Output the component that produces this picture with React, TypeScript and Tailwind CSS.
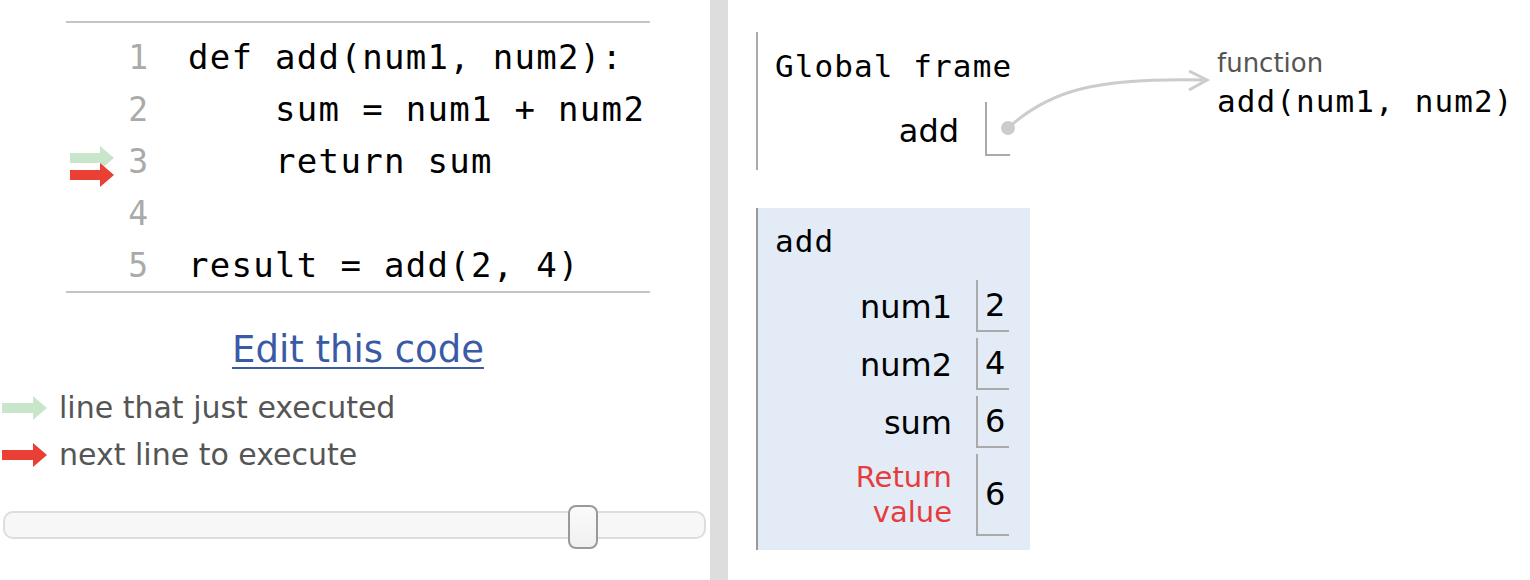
import React from "react";

const mono = "font-['DejaVu_Sans_Mono',monospace]";
const sans = "font-['DejaVu_Sans',sans-serif]";

function Arrow({ color, w = 44 }: { color: string; w?: number }) {
  const s = w - 14;
  return (
    <svg width={w} height={24} viewBox={`0 0 ${w} 24`}>
      <rect x={0} y={7} width={s} height={10} fill={color} />
      <polygon points={`${s},0 ${w},12 ${s},24`} fill={color} />
    </svg>
  );
}

const lines = [
  "def add(num1, num2):",
  "    sum = num1 + num2",
  "    return sum",
  "",
  "result = add(2, 4)",
];

function CodeRow({ n, code }: { n: number; code: string }) {
  return (
    <div className="flex h-[52px] items-center">
      <div className="flex h-full w-[54px] items-center justify-end pr-[6px]">
        {n === 3 && (
          <svg width={44} height={54} viewBox="0 0 44 54" className="shrink-0">
            <rect x={0} y={19} width={30} height={10} fill="#c9e6ca" />
            <polygon points="30,12 44,24 30,36" fill="#c9e6ca" />
            <rect x={0} y={36} width={30} height={10} fill="#e93f34" />
            <polygon points="30,29 44,41 30,53" fill="#e93f34" />
          </svg>
        )}
      </div>
      <div className={`w-[28px] text-right text-[33px] leading-none text-[#aaaaaa] ${mono}`}>{n}</div>
      <div className={`ml-[40px] whitespace-pre text-[34px] leading-none tracking-[1.3px] text-black ${mono}`}>
        {code}
      </div>
    </div>
  );
}

function VarRow({
  label,
  value,
  h,
  red,
  labelW,
  boxW,
  labelPt = "",
  gap = "ml-[26px]",
}: {
  label: React.ReactNode;
  value: string;
  h: number;
  red?: boolean;
  labelW: string;
  boxW: string;
  labelPt?: string;
  gap?: string;
}) {
  return (
    <div className="flex items-center" style={{ height: h }}>
      <div
        className={`${labelW} ${labelPt} text-right ${sans} ${
          red ? "text-[29px] leading-[35px] text-[#e63c3c]" : "text-[32px] leading-none text-black"
        }`}
      >
        {label}
      </div>
      <div
        className={`${gap} flex h-full ${boxW} items-center border-b-2 border-l-2 border-[#aaaaaa] pl-[7px] text-[32px] leading-none text-black ${sans}`}
      >
        {value}
      </div>
    </div>
  );
}

export default function App() {
  return (
    <div className="relative flex h-[580px] w-[1530px] overflow-hidden bg-white">
      {/* Left panel */}
      <div className="flex w-[710px] shrink-0 flex-col">
        <div className="ml-[66px] mt-[21px] w-[584px] border-y-2 border-[#c4c4c4] pt-[8px]">
          {lines.map((c, i) => (
            <CodeRow key={i} n={i + 1} code={c} />
          ))}
        </div>
        <div className="mt-[34px] flex h-[44px] items-center justify-center">
          <span className={`ml-[6px] text-[37px] leading-none text-[#3a5aa6] underline decoration-2 underline-offset-[5px] ${sans}`}>
            Edit this code
          </span>
        </div>
        <div className="mt-[17px] flex h-[40px] items-center pl-[2px]">
          <Arrow color="#c9e6ca" w={45} />
          <span className={`ml-[12px] text-[30px] leading-none text-[#555555] ${sans}`}>line that just executed</span>
        </div>
        <div className="mt-[7px] flex h-[40px] items-center pl-[2px]">
          <Arrow color="#e93f34" w={45} />
          <span className={`ml-[12px] text-[30px] leading-none text-[#555555] ${sans}`}>next line to execute</span>
        </div>
        <div className="relative ml-[3px] mt-[36px] h-[28px] w-[703px] rounded-[10px] border-2 border-[#dddddd] bg-[#f7f7f7]">
          <div className="absolute left-[563px] top-[-8px] h-[44px] w-[30px] rounded-[8px] border-2 border-[#999999] bg-gradient-to-b from-[#fafafa] to-[#f0f0f0]" />
        </div>
      </div>

      {/* Divider */}
      <div className="h-full w-[18px] shrink-0 bg-[#dddddd]" />

      {/* Right panel */}
      <div className="flex flex-1 pl-[28px]">
        <div className="flex flex-col">
          {/* Global frame */}
          <div className="mt-[32px] w-[257px] border-l-2 border-[#aaaaaa] pb-[14px] pt-[16px]">
            <div className={`pl-[17px] text-[31px] leading-[36px] tracking-[1.1px] text-black ${mono}`}>Global frame</div>
            <div className="mt-[18px]">
              <VarRow label="add" value="" h={54} labelW="w-[201px]" boxW="w-[25px]" labelPt="pt-[4px]" />
            </div>
          </div>
          {/* add frame */}
          <div className="mt-[38px] w-[274px] border-l-2 border-[#999999] bg-[#e2ebf6] pb-[14px] pt-[15px]">
            <div className={`pl-[17px] text-[31px] leading-[36px] tracking-[1.1px] text-black ${mono}`}>add</div>
            <div className="mt-[21px] flex flex-col gap-[6px]">
              <VarRow label="num1" value="2" h={52} labelW="w-[194px]" boxW="w-[33px]" labelPt="pt-[2px]" gap="ml-[24px]" />
              <VarRow label="num2" value="4" h={52} labelW="w-[194px]" boxW="w-[33px]" labelPt="pt-[2px]" gap="ml-[24px]" />
              <VarRow label="sum" value="6" h={52} labelW="w-[194px]" boxW="w-[33px]" labelPt="pt-[2px]" gap="ml-[24px]" />
              <VarRow
                label={
                  <>
                    Return
                    <br />
                    value
                  </>
                }
                value="6"
                h={82}
                red
                labelW="w-[194px]"
                boxW="w-[33px]"
                gap="ml-[24px]"
              />
            </div>
          </div>
        </div>
        {/* Heap */}
        <div className="ml-[187px] mt-[47px] flex flex-col">
          <div className={`text-[26px] leading-[32px] text-[#555555] ${sans}`}>function</div>
          <div className={`mt-[4px] text-[31px] leading-[36px] tracking-[1.1px] text-black ${mono}`}>add(num1, num2)</div>
        </div>
      </div>

      {/* Pointer arrow overlay */}
      <svg className="pointer-events-none absolute left-0 top-0" width={1530} height={580} viewBox="0 0 1530 580">
        <path d="M1008 128 C 1050 90, 1095 78, 1203 80" fill="none" stroke="#cccccc" strokeWidth={3} />
        <polyline points="1189,71 1207,80 1189,90" fill="none" stroke="#cccccc" strokeWidth={3} />
        <circle cx={1008} cy={128} r={7} fill="#cccccc" />
      </svg>
    </div>
  );
}
